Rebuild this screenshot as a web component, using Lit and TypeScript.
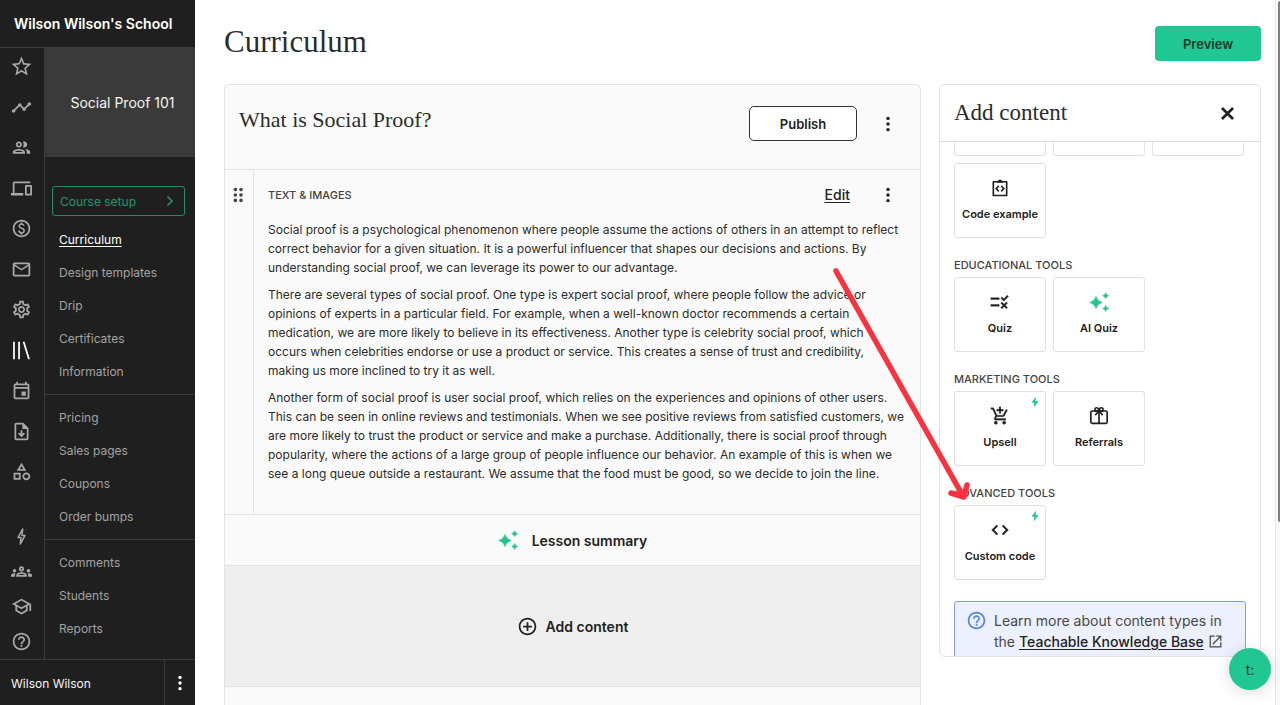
import { LitElement, html, css, svg, nothing } from "lit";
import { customElement, property } from "lit/decorators.js";

const ICONS: Record<string, unknown> = {
  star: svg`<path transform="translate(-1.7 -1.7) scale(1.14)" d="M22 9.24l-7.19-.62L12 2 9.19 8.63 2 9.24l5.46 4.73L5.82 21 12 17.27 18.18 21l-1.63-7.03L22 9.24zM12 15.4l-3.76 2.27 1-4.28-3.32-2.88 4.38-.38L12 6.1l1.71 4.04 4.38.38-3.32 2.88 1 4.28L12 15.4z"/>`,
  timeline: svg`<path d="M23 8c0 1.1-.9 2-2 2-.18 0-.35-.02-.51-.07l-3.56 3.55c.05.16.07.34.07.52 0 1.1-.9 2-2 2s-2-.9-2-2c0-.18.02-.36.07-.52l-2.55-2.55c-.16.05-.34.07-.52.07s-.36-.02-.52-.07l-4.55 4.56c.05.16.07.33.07.51 0 1.1-.9 2-2 2s-2-.9-2-2 .9-2 2-2c.18 0 .35.02.51.07l4.56-4.55C8.02 9.36 8 9.18 8 9c0-1.1.9-2 2-2s2 .9 2 2c0 .18-.02.36-.07.52l2.55 2.55c.16-.05.34-.07.52-.07s.36.02.52.07l3.55-3.56C19.02 8.35 19 8.18 19 8c0-1.1.9-2 2-2s2 .9 2 2z"/>`,
  people: svg`<path d="M9 13.75c-2.34 0-7 1.17-7 3.5V19h14v-1.75c0-2.33-4.66-3.5-7-3.5zM4.34 17c.84-.58 2.87-1.25 4.66-1.25s3.82.67 4.66 1.25H4.34zM9 12c1.93 0 3.5-1.57 3.5-3.5S10.93 5 9 5 5.5 6.57 5.5 8.5 7.07 12 9 12zm0-5c.83 0 1.5.67 1.5 1.5S9.83 10 9 10s-1.5-.67-1.5-1.5S8.17 7 9 7zm7.04 6.81c1.16.84 1.96 1.96 1.96 3.44V19h4v-1.75c0-2.02-3.5-3.17-5.96-3.44zM15 12c1.93 0 3.5-1.57 3.5-3.5S16.93 5 15 5c-.54 0-1.04.13-1.5.35.63.89 1 1.98 1 3.15s-.37 2.26-1 3.15c.46.22.96.35 1.5.35z"/>`,
  devices: svg`<path d="M4 6h18V4H4c-1.1 0-2 .9-2 2v11H0v3h14v-3H4V6zm19 2h-6c-.55 0-1 .45-1 1v10c0 .55.45 1 1 1h6c.55 0 1-.45 1-1V9c0-.55-.45-1-1-1zm-1 10h-4v-8h4v8z"/>`,
  paid: svg`<path d="M12 2C6.48 2 2 6.48 2 12s4.48 10 10 10 10-4.48 10-10S17.52 2 12 2zm0 18c-4.41 0-8-3.59-8-8s3.59-8 8-8 8 3.59 8 8-3.59 8-8 8zm.89-8.9c-1.78-.59-2.64-.96-2.64-1.9 0-1.02 1.11-1.39 1.81-1.39 1.31 0 1.79.99 1.9 1.34l1.58-.67c-.15-.44-.82-1.91-2.66-2.23V5h-1.75v1.26c-2.6.56-2.62 2.85-2.62 2.96 0 2.27 2.25 2.91 3.35 3.31 1.58.56 2.28 1.07 2.28 2.03 0 1.13-1.05 1.61-1.98 1.61-1.82 0-2.34-1.87-2.4-2.09l-1.66.67c.63 2.19 2.28 2.78 3.02 2.96V19h1.75v-1.24c.52-.09 3.02-.59 3.02-3.22.01-1.39-.6-2.61-3-3.44z"/>`,
  mail: svg`<path d="M22 6c0-1.1-.9-2-2-2H4c-1.1 0-2 .9-2 2v12c0 1.1.9 2 2 2h16c1.1 0 2-.9 2-2V6zm-2 0l-8 5-8-5h16zm0 12H4V8l8 5 8-5v10z"/>`,
  settings: svg`<path d="M19.43 12.98c.04-.32.07-.64.07-.98 0-.34-.03-.66-.07-.98l2.11-1.65c.19-.15.24-.42.12-.64l-2-3.46c-.09-.16-.26-.25-.44-.25-.06 0-.12.01-.17.03l-2.49 1c-.52-.4-1.08-.73-1.69-.98l-.38-2.65C14.46 2.18 14.25 2 14 2h-4c-.25 0-.46.18-.49.42l-.38 2.65c-.61.25-1.17.59-1.69.98l-2.49-1c-.06-.02-.12-.03-.18-.03-.17 0-.34.09-.43.25l-2 3.46c-.13.22-.07.49.12.64l2.11 1.65c-.04.32-.07.65-.07.98 0 .33.03.66.07.98l-2.11 1.65c-.19.15-.24.42-.12.64l2 3.46c.09.16.26.25.44.25.06 0 .12-.01.17-.03l2.49-1c.52.4 1.08.73 1.69.98l.38 2.65c.03.24.24.42.49.42h4c.25 0 .46-.18.49-.42l.38-2.65c.61-.25 1.17-.59 1.69-.98l2.49 1c.06.02.12.03.18.03.17 0 .34-.09.43-.25l2-3.46c.12-.22.07-.49-.12-.64l-2.11-1.65zm-1.98-1.71c.04.31.05.52.05.73 0 .21-.02.43-.05.73l-.14 1.13.89.7 1.08.84-.7 1.21-1.27-.51-1.04-.42-.9.68c-.43.32-.84.56-1.25.73l-1.06.43-.16 1.13-.2 1.35h-1.4l-.19-1.35-.16-1.13-1.06-.43c-.43-.18-.83-.41-1.23-.71l-.91-.7-1.06.43-1.27.51-.7-1.21 1.08-.84.89-.7-.14-1.13c-.03-.31-.05-.54-.05-.74s.02-.43.05-.73l.14-1.13-.89-.7-1.08-.84.7-1.21 1.27.51 1.04.42.9-.68c.43-.32.84-.56 1.25-.73l1.06-.43.16-1.13.2-1.35h1.39l.19 1.35.16 1.13 1.06.43c.43.18.83.41 1.23.71l.91.7 1.06-.43 1.27-.51.7 1.21-1.07.85-.89.7.14 1.13zM12 8c-2.21 0-4 1.79-4 4s1.79 4 4 4 4-1.79 4-4-1.79-4-4-4zm0 6c-1.1 0-2-.9-2-2s.9-2 2-2 2 .9 2 2-.9 2-2 2z"/>`,
  library: svg`<path fill="none" stroke="currentColor" stroke-width="2" d="M3.4 2v20M9.2 2v20M14.4 2l6.2 20"/>`,
  event: svg`<path d="M19 4h-1V2h-2v2H8V2H6v2H5c-1.11 0-1.99.9-1.99 2L3 20c0 1.1.89 2 2 2h14c1.1 0 2-.9 2-2V6c0-1.1-.9-2-2-2zm0 16H5V10h14v10zm0-12H5V6h14v2zM12 13h5v5h-5z"/>`,
  download: svg`<path d="M14 2H6c-1.1 0-2 .9-2 2v16c0 1.1.89 2 1.99 2H18c1.1 0 2-.9 2-2V8l-6-6zm4 18H6V4h7v5h5v11zM11 10.500h2v4.200l1.600-1.600 1.400 1.400-4 4-4-4 1.400-1.400 1.600 1.600z"/>`,
  category: svg`<path d="M12 2l-5.500 9h11L12 2zm0 3.840L13.930 9h-3.870L12 5.840zM17.500 13c-2.490 0-4.500 2.010-4.500 4.500s2.010 4.500 4.500 4.500 4.500-2.010 4.500-4.500-2.010-4.500-4.500-4.500zm0 7c-1.380 0-2.500-1.120-2.500-2.500s1.120-2.500 2.500-2.500 2.500 1.120 2.500 2.500-1.120 2.500-2.500 2.500zM3 21.500h8v-8H3v8zm2-6h4v4H5v-4z"/>`,
  boltOutline: svg`<path fill="none" stroke="currentColor" stroke-width="1.700" stroke-linejoin="round" d="M13.400 3.400L8 13.200h3.400l-.8 7.400L16 10.800h-3.400z"/>`,
  bolt: svg`<path d="M14 1L5 13.500h5.500L9.500 23 19 10h-6z"/>`,
  groups: svg`<path d="M4 13c1.1 0 2-.9 2-2s-.9-2-2-2-2 .9-2 2 .9 2 2 2zm1.130 1.100c-.37-.06-.74-.1-1.130-.1-.99 0-1.930.21-2.780.58C.48 14.900 0 15.620 0 16.430V18h4.500v-1.610c0-.83.23-1.610.63-2.290zM20 13c1.100 0 2-.9 2-2s-.9-2-2-2-2 .9-2 2 .9 2 2 2zm4 3.430c0-.81-.48-1.530-1.220-1.850-.85-.37-1.790-.58-2.780-.58-.39 0-.76.04-1.130.1.4.68.63 1.460.63 2.290V18H24v-1.570zm-7.760-2.780c-1.170-.52-2.610-.9-4.240-.9s-3.070.39-4.240.9C6.680 14.130 6 15.210 6 16.390V18h12v-1.610c0-1.180-.68-2.260-1.760-2.740zM8.070 16c.09-.23.13-.39.91-.69.97-.38 1.990-.56 3.020-.56s2.050.18 3.020.56c.77.3.81.46.91.69H8.070zM12 8c.55 0 1 .45 1 1s-.45 1-1 1-1-.45-1-1 .45-1 1-1m0-2c-1.660 0-3 1.340-3 3s1.340 3 3 3 3-1.340 3-3-1.340-3-3-3z"/>`,
  school: svg`<path d="M12 3L1 9l4 2.180v6L12 21l7-3.820v-6l2-1.090V17h2V9L12 3zm6.820 6L12 12.720 5.180 9 12 5.280 18.820 9zM17 15.990l-5 2.730-5-2.730v-3.720L12 15l5-2.730v3.720z"/>`,
  help: svg`<path d="M11 18h2v-2h-2v2zm1-16C6.480 2 2 6.480 2 12s4.480 10 10 10 10-4.480 10-10S17.520 2 12 2zm0 18c-4.410 0-8-3.590-8-8s3.590-8 8-8 8 3.590 8 8-3.590 8-8 8zm0-14c-2.210 0-4 1.790-4 4h2c0-1.100.9-2 2-2s2 .9 2 2c0 2-3 1.750-3 5h2c0-2.250 3-2.500 3-5 0-2.210-1.790-4-4-4z"/>`,
  chevron: svg`<path fill="none" stroke="currentColor" stroke-width="3" d="M7 3l9 9-9 9"/>`,
  more: svg`<circle cx="12" cy="4.500" r="2.300"/><circle cx="12" cy="12" r="2.300"/><circle cx="12" cy="19.500" r="2.300"/>`,
  drag: svg`<circle cx="8.500" cy="4.800" r="2.400"/><circle cx="8.500" cy="12" r="2.400"/><circle cx="8.500" cy="19.200" r="2.400"/><circle cx="16" cy="4.800" r="2.400"/><circle cx="16" cy="12" r="2.400"/><circle cx="16" cy="19.200" r="2.400"/>`,
  close: svg`<path fill="none" stroke="currentColor" stroke-width="3.400" d="M5 5l14 14M19 5L5 19"/>`,
  codeExample: svg`<path fill="none" stroke="currentColor" stroke-width="2" stroke-linejoin="round" d="M4 4.500h16v16.500H4z"/><path d="M8.500 3.600h1.200a2.400 2.400 0 0 1 4.600 0h1.200v2h-7z"/><path fill="none" stroke="currentColor" stroke-width="1.900" d="M10.600 9.400L7.400 12.700l3.200 3.300M13.400 9.400l3.200 3.300-3.200 3.300"/>`,
  quiz: svg`<path stroke="currentColor" stroke-width=".5" d="M16.540 11L13 7.460l1.410-1.410 2.120 2.120 4.240-4.240 1.410 1.410L16.540 11zM11 7H1v2h10V7zm10 6.410L19.590 12 17 14.590 14.410 12 13 13.410 15.590 16 13 18.590 14.410 20 17 17.410 19.590 20 21 18.590 18.410 16 21 13.410zM11 15H1v2h10v-2z"/>`,
  sparkle: svg`<path d="M8.400 5.200Q9.800 10.800 15.800 12.600Q9.800 14.400 8.400 20Q7 14.400 1 12.600Q7 10.800 8.400 5.200zM20 .8Q20.700 3.700 23.600 4.400Q20.700 5.100 20 8Q19.300 5.100 16.400 4.400Q19.300 3.700 20 .8zM20 16.200Q20.700 19.100 23.600 19.800Q20.700 20.500 20 23.400Q19.300 20.500 16.400 19.800Q19.300 19.100 20 16.200z" stroke="currentColor" stroke-width=".7" stroke-linejoin="round"/>`,
  cart: svg`<path stroke="currentColor" stroke-width=".3" d="M11 9h2V6h3V4h-3V1h-2v3H8v2h3v3zm-4 9c-1.100 0-1.990.9-1.990 2S5.900 22 7 22s2-.9 2-2-.9-2-2-2zm10 0c-1.100 0-1.990.9-1.990 2s.89 2 1.990 2 2-.9 2-2-.9-2-2-2zm-8.900-5h7.450c.75 0 1.410-.41 1.750-1.030L21 4.960 19.250 4l-3.700 7H8.530L4.270 2H1v2h2l3.600 7.590-1.350 2.440C4.520 15.370 5.480 17 7 17h12v-2H7l1.100-2z"/>`,
  gift: svg`<g fill="none" stroke="currentColor" stroke-width="2"><rect x="2.200" y="6" width="19.600" height="14.800" rx="1.600"/><path d="M12 6v14.800M12 6L7.500 11M12 6l4.500 5"/><circle cx="9.200" cy="4.200" r="2.100"/><circle cx="14.800" cy="4.200" r="2.100"/></g>`,
  code: svg`<path d="M9.400 16.600L4.800 12l4.600-4.600L8 6l-6 6 6 6 1.400-1.400zm5.200 0l4.600-4.600-4.600-4.600L16 6l6 6-6 6-1.400-1.400z" stroke="currentColor" stroke-width=".6"/>`,
  addCircle: svg`<path d="M13 7h-2v4H7v2h4v4h2v-4h4v-2h-4V7zm-1-5C6.480 2 2 6.480 2 12s4.480 10 10 10 10-4.480 10-10S17.520 2 12 2zm0 18c-4.410 0-8-3.590-8-8s3.590-8 8-8 8 3.590 8 8-3.590 8-8 8z"/>`,
  external: svg`<path fill="none" stroke="currentColor" stroke-width="2" d="M11 3.500H3.500v17h17V13M7.500 16.500L20 4M13.500 3.500h7V11"/>`,
};

@customElement("ui-icon")
export class UiIcon extends LitElement {
  @property() name = "";

  static styles = css`
    :host {
      display: inline-flex;
      flex: none;
      width: 21px;
      height: 21px;
    }
    svg {
      width: 100%;
      height: 100%;
      fill: currentColor;
      display: block;
    }
  `;

  render() {
    return html`<svg viewBox="0 0 24 24" aria-hidden="true">${ICONS[this.name]}</svg>`;
  }
}

@customElement("school-sidebar")
export class SchoolSidebar extends LitElement {
  private railTop = [
    ["star", "Favorites"],
    ["timeline", "Analytics"],
    ["people", "Users"],
    ["devices", "Site"],
    ["paid", "Sales"],
    ["mail", "Emails"],
    ["settings", "Settings"],
    ["library", "Courses"],
    ["event", "Coaching"],
    ["download", "Downloads"],
    ["category", "Bundles"],
  ];
  private railBottom = [
    ["boltOutline", "Upgrade"],
    ["groups", "Community"],
    ["school", "Academy"],
    ["help", "Help"],
  ];
  private groups = [
    ["Curriculum", "Design templates", "Drip", "Certificates", "Information"],
    ["Pricing", "Sales pages", "Coupons", "Order bumps"],
    ["Comments", "Students", "Reports"],
  ];

  static styles = css`
    :host {
      display: flex;
      flex-direction: column;
      background: #1f1f1f;
      color: #f5f5f5;
      font-size: 12px;
    }
    a {
      color: inherit;
      text-decoration: none;
    }
    button {
      font: inherit;
      cursor: pointer;
      background: none;
    }
    .school {
      height: 47px;
      line-height: 47px;
      padding-left: 14px;
      border-bottom: 1px solid #3a3a3a;
      color: #fff;
      font-size: 14px;
      font-weight: 600;
    }
    .middle {
      flex: 1;
      display: flex;
      min-height: 0;
    }
    .rail {
      box-sizing: border-box;
      width: 45px;
      border-right: 1px solid #3a3a3a;
      padding: 8px 2px 7px 0;
      display: flex;
      flex-direction: column;
      align-items: center;
      gap: 44px;
      color: #a9a9a9;
    }
    .rail a {
      display: flex;
    }
    .rail a.current {
      color: #fff;
    }
    .rail-top {
      flex: 1;
      display: flex;
      flex-direction: column;
      justify-content: space-between;
    }
    .rail-bottom {
      display: flex;
      flex-direction: column;
      gap: 14px;
    }
    .menu {
      flex: 1;
    }
    .course {
      height: 109px;
      display: flex;
      align-items: center;
      justify-content: center;
      padding-left: 5px;
      background: #3a3a3a;
      font-size: 14px;
    }
    .setup {
      display: flex;
      align-items: center;
      justify-content: space-between;
      box-sizing: border-box;
      width: 133px;
      height: 30px;
      margin: 29px 0 7px 7px;
      padding: 0 8px 0 7px;
      border: 1px solid #208f69;
      border-radius: 3px;
      color: #24966f;
    }
    .setup ui-icon {
      width: 12px;
      height: 12px;
    }
    ul {
      list-style: none;
      margin: 0;
      padding: 0 0 6px 14px;
      color: #a3a3a3;
    }
    ul + ul {
      padding-top: 6px;
      border-top: 1px solid #3a3a3a;
    }
    li {
      line-height: 33px;
    }
    .menu a.current {
      color: #fff;
      text-decoration: underline;
      text-underline-offset: 2px;
    }
    .user {
      display: flex;
      border-top: 1px solid #3a3a3a;
      height: 45px;
    }
    .user span {
      flex: 1;
      padding-left: 11px;
      line-height: 48px;
    }
    .user button {
      width: 31px;
      padding: 0;
      border: 0;
      border-left: 1px solid #3a3a3a;
      color: #fff;
      display: flex;
      align-items: center;
      justify-content: center;
    }
    .user ui-icon {
      width: 18px;
      height: 18px;
    }
  `;

  render() {
    const link = ([icon, label]: string[]) => html`<a
      href="#" aria-label=${label} class=${icon === "library" ? "current" : ""}
      ><ui-icon name=${icon}></ui-icon></a>`;
    return html`
      <div class="school">Wilson Wilson's School</div>
      <div class="middle">
        <nav class="rail" aria-label="School">
          <div class="rail-top">${this.railTop.map(link)}</div>
          <div class="rail-bottom">${this.railBottom.map(link)}</div>
        </nav>
        <nav class="menu" aria-label="Course">
          <div class="course">Social Proof 101</div>
          <button class="setup">Course setup<ui-icon name="chevron"></ui-icon></button>
          ${this.groups.map(
            (group) => html`<ul>
              ${group.map((item) => html`<li><a href="#" class=${item === "Curriculum" ? "current" : ""}>${item}</a></li>`)}
            </ul>`
          )}
        </nav>
      </div>
      <div class="user">
        <span>Wilson Wilson</span>
        <button aria-label="Account menu"><ui-icon name="more"></ui-icon></button>
      </div>
    `;
  }
}

@customElement("lesson-card")
export class LessonCard extends LitElement {
  private paragraphs = [
    "Social proof is a psychological phenomenon where people assume the actions of others in an attempt to reflect correct behavior for a given situation. It is a powerful influencer that shapes our decisions and actions. By understanding social proof, we can leverage its power to our advantage.",
    "There are several types of social proof. One type is expert social proof, where people follow the advice or opinions of experts in a particular field. For example, when a well-known doctor recommends a certain medication, we are more likely to believe in its effectiveness. Another type is celebrity social proof, which occurs when celebrities endorse or use a product or service. This creates a sense of trust and credibility, making us more inclined to try it as well.",
    "Another form of social proof is user social proof, which relies on the experiences and opinions of other users. This can be seen in online reviews and testimonials. When we see positive reviews from satisfied customers, we are more likely to trust the product or service and make a purchase. Additionally, there is social proof through popularity, where the actions of a large group of people influence our behavior. An example of this is when we see a long queue outside a restaurant. We assume that the food must be good, so we decide to join the line.",
  ];

  static styles = css`
    :host {
      display: flex;
      flex-direction: column;
      box-sizing: border-box;
      border: 1px solid #e3e3e3;
      border-bottom: 0;
      border-radius: 6px 6px 0 0;
      background: #fafafa;
      overflow: hidden;
      color: #222;
    }
    button {
      font: inherit;
      color: inherit;
      background: none;
      border: 0;
      cursor: pointer;
    }
    .head {
      display: flex;
      align-items: flex-start;
      height: 63px;
      padding: 21px 16px 0 14px;
      border-bottom: 1px solid #e3e3e3;
    }
    h2 {
      flex: 1;
      margin: 0;
      font-family: "Liberation Serif", serif;
      font-weight: 400;
      font-size: 22px;
      line-height: 28px;
      color: #2c2c2c;
    }
    .publish {
      box-sizing: border-box;
      width: 108px;
      height: 35px;
      background: #fff;
      border: 1px solid #333;
      border-radius: 5px;
      font-size: 13px;
      font-weight: 600;
    }
    .more {
      display: flex;
      align-items: center;
      justify-content: center;
      width: 32px;
      height: 35px;
      padding: 0;
      margin-left: 15px;
    }
    .more ui-icon {
      width: 18px;
      height: 18px;
    }
    .block {
      display: flex;
      border-bottom: 1px solid #e3e3e3;
    }
    .handle {
      box-sizing: border-box;
      width: 29px;
      padding: 16px 0 0 4px;
      border-right: 1px solid #e3e3e3;
      color: #444;
    }
    .handle ui-icon {
      width: 18px;
      height: 18px;
    }
    .body {
      flex: 1;
      padding: 7px 0 23px 14px;
    }
    .bar {
      display: flex;
      align-items: center;
      padding-right: 16px;
      margin-bottom: 8px;
    }
    h3 {
      flex: 1;
      margin: 0;
      font-size: 11px;
      font-weight: 500;
      line-height: 16px;
      color: #444;
    }
    .edit {
      color: inherit;
      font-size: 14px;
      font-weight: 500;
      text-underline-offset: 2px;
      margin-right: 7px;
    }
    p {
      margin: 0 15px 8px 0;
      font-size: 12px;
      line-height: 19px;
      color: #2c2c2c;
    }
    .summary,
    .add {
      display: flex;
      align-items: center;
      justify-content: center;
      font-size: 14px;
      font-weight: 600;
      border-bottom: 1px solid #e3e3e3;
    }
    .summary {
      height: 51px;
      gap: 14px;
    }
    .summary ui-icon {
      width: 20px;
      height: 20px;
      color: #24c48f;
    }
    .add {
      height: 121px;
      gap: 8px;
      background: #efefef;
    }
  `;

  render() {
    return html`
      <div class="head">
        <h2>What is Social Proof?</h2>
        <button class="publish">Publish</button>
        <button class="more" aria-label="Lesson options"><ui-icon name="more"></ui-icon></button>
      </div>
      <div class="block">
        <div class="handle"><ui-icon name="drag"></ui-icon></div>
        <div class="body">
          <div class="bar">
            <h3>TEXT &amp; IMAGES</h3>
            <a class="edit" href="#">Edit</a>
            <button class="more" aria-label="Block options"><ui-icon name="more"></ui-icon></button>
          </div>
          ${this.paragraphs.map((text) => html`<p>${text}</p>`)}
        </div>
      </div>
      <button class="summary"><ui-icon name="sparkle"></ui-icon>Lesson summary</button>
      <button class="add"><ui-icon name="addCircle"></ui-icon>Add content</button>
    `;
  }
}

interface Tool {
  icon: string;
  label: string;
  green?: boolean;
  paid?: boolean;
}

@customElement("content-panel")
export class ContentPanel extends LitElement {
  private sections: { title: string; tools: Tool[] }[] = [
    {
      title: "EDUCATIONAL TOOLS",
      tools: [
        { icon: "quiz", label: "Quiz" },
        { icon: "sparkle", label: "AI Quiz", green: true },
      ],
    },
    {
      title: "MARKETING TOOLS",
      tools: [
        { icon: "cart", label: "Upsell", paid: true },
        { icon: "gift", label: "Referrals" },
      ],
    },
    {
      title: "ADVANCED TOOLS",
      tools: [{ icon: "code", label: "Custom code", paid: true }],
    },
  ];

  static styles = css`
    :host {
      display: flex;
      flex-direction: column;
      box-sizing: border-box;
      border: 1px solid #e3e3e3;
      border-radius: 6px;
      background: #fff;
      overflow: hidden;
      color: #222;
    }
    header {
      flex: none;
      display: flex;
      align-items: center;
      justify-content: space-between;
      height: 56px;
      padding: 0 23px 0 14px;
      border-bottom: 1px solid #ddd;
    }
    h2 {
      margin: 0;
      font-family: "Liberation Serif", serif;
      font-weight: 400;
      font-size: 23px;
      line-height: 30px;
      color: #2c2c2c;
    }
    button {
      font: inherit;
      color: inherit;
      background: none;
      border: 0;
      padding: 0;
      cursor: pointer;
    }
    .close ui-icon {
      width: 19px;
      height: 19px;
      display: flex;
    }
    .content {
      flex: 1;
      min-height: 0;
      overflow: hidden;
      padding: 0 14px;
    }
    .grid {
      display: grid;
      grid-template-columns: repeat(3, 92px);
      gap: 7px;
    }
    .tile,
    .tail {
      box-sizing: border-box;
      border: 1px solid #e0e0e0;
      border-radius: 3px;
    }
    .tail {
      height: 14px;
      border-top: 0;
      border-radius: 0 0 3px 3px;
    }
    .tile {
      position: relative;
      height: 75px;
      display: flex;
      flex-direction: column;
      align-items: center;
      padding-top: 14px;
      gap: 8px;
      font-size: 11px;
      font-weight: 600;
      line-height: 16px;
      white-space: nowrap;
    }
    .tile ui-icon {
      width: 20px;
      height: 20px;
    }
    .tile ui-icon.green {
      color: #24c48f;
    }
    .tile ui-icon.badge {
      position: absolute;
      top: 4px;
      right: 4px;
      width: 12px;
      height: 12px;
      color: #24c48f;
    }
    h3 {
      margin: 19px 0 4px;
      font-size: 11px;
      font-weight: 500;
      line-height: 16px;
      color: #444;
    }
    .note {
      display: flex;
      gap: 7px;
      margin-top: 21px;
      padding: 8px 11px 16px;
      border: 1px solid #7f9df0;
      border-radius: 3px;
      background: #edf0fe;
      color: #484848;
      font-size: 14px;
      line-height: 21px;
    }
    .note > ui-icon {
      color: #5584ee;
    }
    .note div {
      display: flex;
      align-items: center;
      gap: 4px;
      white-space: nowrap;
    }
    .note a {
      color: #222;
      font-weight: 500;
      text-underline-offset: 2px;
    }
    .note div ui-icon {
      width: 15px;
      height: 15px;
    }
  `;

  private tile(tool: Tool) {
    return html`<button class="tile">
      <ui-icon name=${tool.icon} class=${tool.green ? "green" : ""}></ui-icon>
      ${tool.label}
      ${tool.paid ? html`<ui-icon class="badge" name="bolt"></ui-icon>` : nothing}
    </button>`;
  }

  render() {
    return html`
      <header>
        <h2>Add content</h2>
        <button class="close" aria-label="Close"><ui-icon name="close"></ui-icon></button>
      </header>
      <div class="content">
        <div class="grid">
          <div class="tail"></div>
          <div class="tail"></div>
          <div class="tail"></div>
          ${this.tile({ icon: "codeExample", label: "Code example" })}
        </div>
        ${this.sections.map(
          (section) => html`<h3>${section.title}</h3>
            <div class="grid">${section.tools.map((tool) => this.tile(tool))}</div>`
        )}
        <div class="note">
          <ui-icon name="help"></ui-icon>
          <section>
            <div>Learn more about content types in</div>
            <div>the <a href="#">Teachable Knowledge Base</a><ui-icon name="external"></ui-icon></div>
          </section>
        </div>
      </div>
    `;
  }
}

@customElement("app-root")
export class AppRoot extends LitElement {
  static styles = css`
    :host {
      display: flex;
      position: relative;
      height: 100vh;
      overflow: hidden;
      background: #fff;
      font-family: Inter, "Liberation Sans", sans-serif;
    }
    school-sidebar {
      flex: none;
      width: 195px;
    }
    main {
      flex: 1;
      min-width: 0;
      display: flex;
      flex-direction: column;
      padding: 0 14px 0 29px;
    }
    .top {
      flex: none;
      display: flex;
      justify-content: space-between;
      height: 84px;
    }
    h1 {
      margin: 0;
      font-family: "Liberation Serif", serif;
      font-weight: 400;
      font-size: 31px;
      line-height: 84px;
      color: #2c2c2c;
    }
    .preview {
      width: 106px;
      height: 35px;
      margin-top: 26px;
      border: 0;
      border-radius: 4px;
      background: #20c792;
      color: #1c3a2f;
      font: inherit;
      font-size: 13px;
      font-weight: 600;
      cursor: pointer;
    }
    .columns {
      flex: 1;
      min-height: 0;
      display: grid;
      grid-template-columns: minmax(0, 1fr) 322px;
      gap: 18px;
    }
    content-panel {
      margin-bottom: 48px;
      min-height: 0;
    }
    .scroll {
      flex: none;
      box-sizing: border-box;
      width: 5px;
      border-left: 1px solid #e6e6e6;
      background: #fafafa;
      padding: 1px 0 0 2px;
    }
    .thumb {
      height: 74%;
      background: #7d7d7d;
      border-radius: 2px 0 0 2px;
    }
    .chat {
      position: absolute;
      right: 9px;
      bottom: 15px;
      width: 42px;
      height: 42px;
      padding: 0;
      border: 0;
      border-radius: 50%;
      background: #20c792;
      color: #1c2f28;
      font: inherit;
      font-size: 14px;
      box-shadow: 0 2px 16px rgba(0, 0, 0, 0.14);
      cursor: pointer;
    }
    .arrow {
      position: absolute;
      left: 827px;
      top: 262px;
      width: 148px;
      height: 244px;
      pointer-events: none;
    }
  `;

  render() {
    return html`
      <school-sidebar></school-sidebar>
      <main>
        <div class="top">
          <h1>Curriculum</h1>
          <button class="preview">Preview</button>
        </div>
        <div class="columns">
          <lesson-card></lesson-card>
          <content-panel></content-panel>
        </div>
      </main>
      <div class="scroll"><div class="thumb"></div></div>
      <svg class="arrow" viewBox="0 0 148 244" fill="none" stroke="#f8323f" stroke-linecap="round" stroke-linejoin="round" aria-hidden="true">
        <path stroke-width="5.500" d="M9 9L136 234" />
        <path stroke-width="5.500" d="M124 231l13 4 3-12" />
      </svg>
      <button class="chat" aria-label="Open chat">t:</button>
    `;
  }
}
